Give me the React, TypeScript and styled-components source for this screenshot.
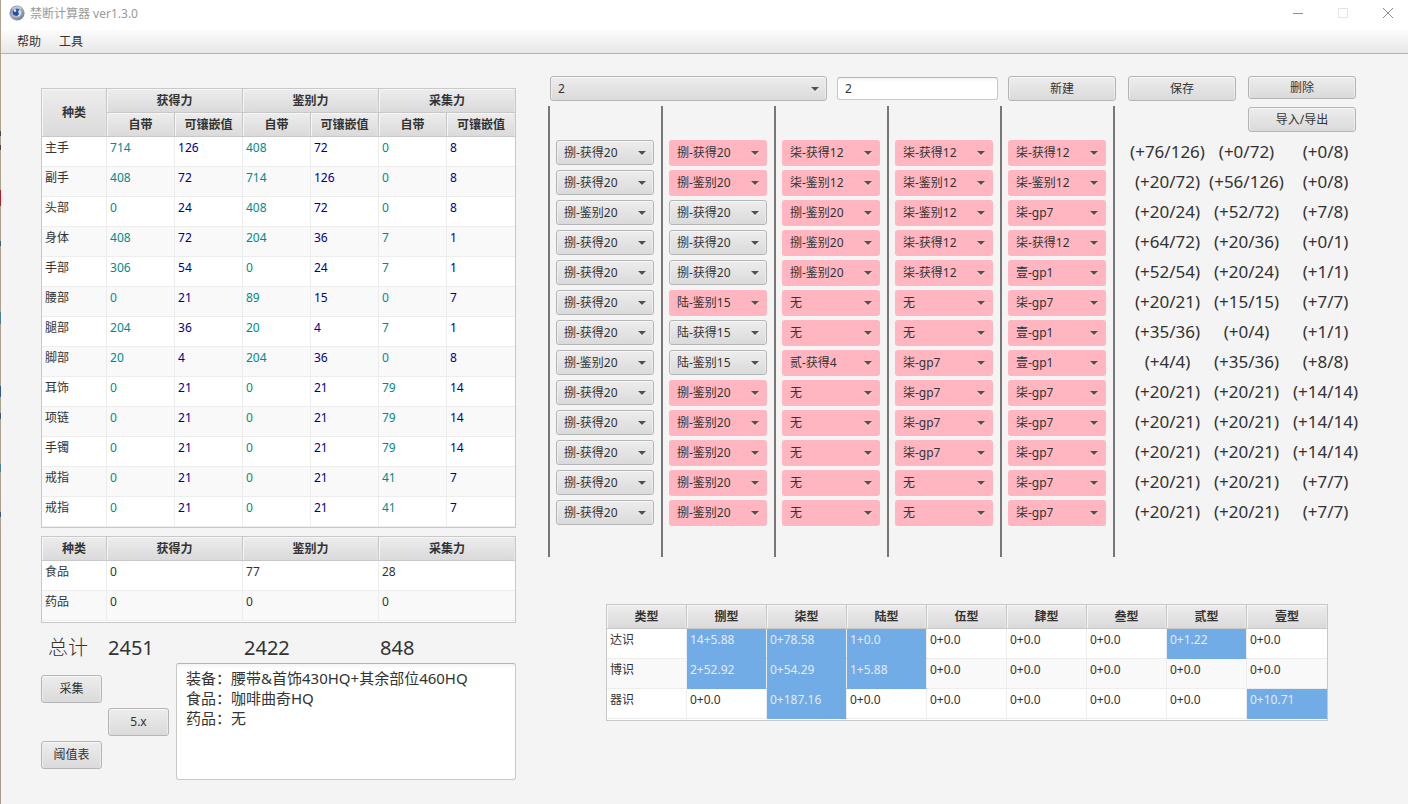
import React from "react";
import styled, { createGlobalStyle, css } from "styled-components";

const GlobalStyle = createGlobalStyle`
  *, *::before, *::after { box-sizing: border-box; }
  body { margin: 0; background: #f4f4f4; }
  body, button, input, select, textarea {
    font-family: "Noto Sans", "Noto Sans CJK SC", sans-serif;
    font-size: 12px;
    color: #333333;
  }
`;

const raised = css`
  border: 1px solid #b5b5b5;
  border-radius: 3px;
  background: linear-gradient(#ededed, #dadada);
  box-shadow: inset 0 1px 0 #f8f8f8, inset 1px 0 0 #ececec, inset -1px 0 0 #ececec;
`;

/* The first pixel column shows the desktop behind the window. */
const Window = styled.div`
  min-height: 100vh;
  padding-left: 1px;
  background:
    linear-gradient(
      transparent 131px, #3c4a5c 131px 136px, transparent 136px 145px,
      #4a4450 145px 150px, transparent 150px 190px, #b0202c 190px 206px,
      transparent 206px 241px, #45607a 241px 246px, transparent 246px 312px,
      #4a7f92 312px 324px, transparent 324px 386px, #35588a 386px 397px,
      transparent 397px 413px, #3f5a78 413px 419px, transparent 419px 464px,
      #4a7f92 464px 472px, transparent 472px 512px, #45557a 512px 517px,
      transparent 517px
    ) 0 0 / 1px 100% no-repeat,
    linear-gradient(#b0a48f, #a39c8c) 0 0 / 1px 100% no-repeat,
    #f4f4f4;
`;

const TitleBar = styled.header`
  display: flex;
  align-items: center;
  height: 30px;
  padding: 0 0 4px 8px;
  background: #ffffff;
`;

const Title = styled.h1`
  flex: 1;
  margin: 0 0 0 5px;
  padding-top: 1px;
  font-size: 12px;
  font-weight: 400;
  line-height: 20px;
  color: #999999;
`;

const WindowControls = styled.div`
  display: flex;
  gap: 5px;
`;

const WindowControl = styled.button<{ $tone: string }>`
  display: grid;
  place-items: center;
  width: 40px;
  height: 26px;
  padding: 0;
  border: 0;
  background: transparent;
  color: ${(p) => p.$tone};
`;

const MenuBar = styled.nav`
  display: flex;
  gap: 18px;
  height: 24px;
  padding: 0 16px;
  border-bottom: 1px solid #b5b5b5;
  background: linear-gradient(#fcfcfc, #e7e7e7);
`;

const MenuItem = styled.button`
  padding: 0;
  border: 0;
  background: transparent;
  line-height: 22px;
`;

const Main = styled.main`
  display: grid;
  grid-template-columns: minmax(0, 475fr) minmax(0, 817fr);
  gap: 32px;
  align-items: start;
  padding: 22px 43px 24px 40px;
`;

const GearPanel = styled.section`
  padding-top: 12px;
`;

const TableFrame = styled.div`
  margin-bottom: 8px;
  border: 1px solid #c8c8c8;
  background: #ffffff;
`;

const SpareFrame = styled(TableFrame)`
  margin-bottom: 0;
  padding-bottom: 1px;
`;

const MateriaFrame = styled(SpareFrame)`
  margin: 47px 37px 0 58px;
`;

const Table = styled.table`
  width: 100%;
  table-layout: fixed;
  border-collapse: separate;
  border-spacing: 0;
`;

const HeadCell = styled.th`
  height: 24px;
  padding: 1px 0 0;
  border-right: 1px solid #c8c8c8;
  border-bottom: 1px solid #c8c8c8;
  background: linear-gradient(#ededed, #dadada);
  box-shadow: inset 1px 1px 0 #f6f6f6, inset -1px 0 0 #e6e6e6;
  font-weight: 700;
  line-height: 22px;
  text-align: center;
  white-space: nowrap;

  &:last-child { border-right-width: 0; }
`;

const Row = styled.tr`
  background: #ffffff;
  &:nth-child(even) { background: #f9f9f9; }
`;

const Cell = styled.td<{ $color?: string; $marked?: boolean }>`
  height: 30px;
  padding: 0 3px;
  border-right: 1px solid #ededed;
  border-bottom: 1px solid ${(p) => (p.$marked ? "#72ace6" : "#ededed")};
  background: ${(p) => (p.$marked ? "#72ace6" : "transparent")};
  color: ${(p) => (p.$marked ? "#e6eaf4" : p.$color ?? "#333333")};
  line-height: 22px;
  vertical-align: top;
  white-space: nowrap;

  &:last-child { border-right-width: 0; }
`;

const Totals = styled.dl`
  display: grid;
  grid-template-columns: 66fr 136fr 136fr 137fr;
  height: 40px;
  margin: 0;
  padding-top: 5px;
  font-size: 20px;
  line-height: 40px;
`;

const TotalName = styled.dt`
  padding-left: 7px;
  font-weight: 300;
`;

const TotalValue = styled.dd`
  margin: 0;
  padding-left: 1px;
`;

const Footer = styled.div`
  display: flex;
  align-items: center;
  gap: 7px;
`;

const FooterButtons = styled.div`
  display: flex;
  align-items: center;
  gap: 6px;
`;

const FooterStack = styled.div`
  display: flex;
  flex-direction: column;
  gap: 38px;
`;

const Button = styled.button<{ $width: number; $height: number }>`
  ${raised}
  width: ${(p) => p.$width}px;
  height: ${(p) => p.$height}px;
  padding: 0;
  line-height: 20px;
`;

const Notes = styled.textarea`
  flex: 1;
  min-width: 0;
  height: 117px;
  padding: 4px 9px;
  border: 1px solid #c8c8c8;
  border-top-color: #b5b5b5;
  border-radius: 3px;
  background: linear-gradient(#f4f4f4, #ffffff 5px);
  font-size: 15px;
  line-height: 20px;
  resize: none;
`;

const PlanPanel = styled.section`
  min-width: 0;
`;

const Toolbar = styled.div`
  display: flex;
  align-items: flex-start;
  gap: 10px;
  height: 30px;
  padding: 0 9px 0 2px;
`;

const ToolbarButtons = styled.div`
  display: flex;
  gap: 12px;
`;

const SelectBox = styled.div<{ $over?: boolean; $basis?: number }>`
  position: relative;
  flex: ${(p) => (p.$basis ? `${p.$basis} 1 ${p.$basis}px` : "none")};
  height: 30px;
  padding: ${(p) => (p.$basis ? "0" : "2px 0")};

  select {
    ${raised}
    display: block;
    width: 100%;
    height: ${(p) => (p.$over ? 26 : 25)}px;
    padding: 0 20px 0 7px;
    appearance: none;
    line-height: 20px;
    ${(p) =>
      p.$over &&
      css`
        padding-left: 8px;
        border: 0;
        background: #ffb6c1;
        box-shadow: none;
      `}
  }

  &::after {
    content: "";
    position: absolute;
    top: ${(p) => (p.$basis ? 11 : 13)}px;
    right: 8px;
    border: 4px solid transparent;
    border-top-color: #505050;
    border-bottom-width: 0;
    filter: drop-shadow(0 1px 0 rgba(255, 255, 255, 0.5));
    pointer-events: none;
  }
`;

const NameInput = styled.input`
  flex: 161 1 161px;
  min-width: 0;
  height: 23px;
  margin-top: 1px;
  padding: 0 7px;
  border: 1px solid #c8c8c8;
  border-top-color: #b5b5b5;
  border-radius: 3px;
  background: linear-gradient(#f4f4f4, #ffffff 4px);
`;

const Board = styled.div`
  display: grid;
  grid-template-columns: repeat(5, minmax(0, 113fr)) minmax(0, 252fr);
`;

const SlotColumn = styled.div`
  padding: 32px 7px 29px 6px;
  border-left: 2px solid #777777;
`;

const StatColumn = styled.div`
  padding-left: 13px;
  border-left: 2px solid #777777;
`;

const StatHeader = styled.div`
  display: flex;
  justify-content: flex-end;
  height: 32px;
  padding: 1px 9px 0 0;
`;

const StatRow = styled.div`
  display: grid;
  grid-template-columns: repeat(3, 1fr);
  height: 30px;
  font-size: 17px;
  line-height: 28px;
  text-align: center;
  white-space: nowrap;
`;

const TEAL = "#008b8b";
const NAVY = "#00008b";

const gear: [string, ...number[]][] = [
  ["主手", 714, 126, 408, 72, 0, 8],
  ["副手", 408, 72, 714, 126, 0, 8],
  ["头部", 0, 24, 408, 72, 0, 8],
  ["身体", 408, 72, 204, 36, 7, 1],
  ["手部", 306, 54, 0, 24, 7, 1],
  ["腰部", 0, 21, 89, 15, 0, 7],
  ["腿部", 204, 36, 20, 4, 7, 1],
  ["脚部", 20, 4, 204, 36, 0, 8],
  ["耳饰", 0, 21, 0, 21, 79, 14],
  ["项链", 0, 21, 0, 21, 79, 14],
  ["手镯", 0, 21, 0, 21, 79, 14],
  ["戒指", 0, 21, 0, 21, 41, 7],
  ["戒指", 0, 21, 0, 21, 41, 7],
];

const supplies = [
  ["食品", "0", "77", "28"],
  ["药品", "0", "0", "0"],
];

/* A leading "!" marks a slot that needs forbidden melding. */
const slots = [
  ["捌-获得20", "捌-获得20", "捌-鉴别20", "捌-获得20", "捌-获得20", "捌-获得20", "捌-获得20", "捌-鉴别20", "捌-获得20", "捌-获得20", "捌-获得20", "捌-获得20", "捌-获得20"],
  ["!捌-获得20", "!捌-鉴别20", "捌-获得20", "捌-获得20", "捌-获得20", "!陆-鉴别15", "陆-获得15", "陆-鉴别15", "!捌-鉴别20", "!捌-鉴别20", "!捌-鉴别20", "!捌-鉴别20", "!捌-鉴别20"],
  ["!柒-获得12", "!柒-鉴别12", "!捌-鉴别20", "!捌-鉴别20", "!捌-鉴别20", "!无", "!无", "!贰-获得4", "!无", "!无", "!无", "!无", "!无"],
  ["!柒-获得12", "!柒-鉴别12", "!柒-鉴别12", "!柒-获得12", "!柒-获得12", "!无", "!无", "!柒-gp7", "!柒-gp7", "!柒-gp7", "!柒-gp7", "!无", "!无"],
  ["!柒-获得12", "!柒-鉴别12", "!柒-gp7", "!柒-获得12", "!壹-gp1", "!柒-gp7", "!壹-gp1", "!壹-gp1", "!柒-gp7", "!柒-gp7", "!柒-gp7", "!柒-gp7", "!柒-gp7"],
];

const stats = [
  ["(+76/126)", "(+0/72)", "(+0/8)"],
  ["(+20/72)", "(+56/126)", "(+0/8)"],
  ["(+20/24)", "(+52/72)", "(+7/8)"],
  ["(+64/72)", "(+20/36)", "(+0/1)"],
  ["(+52/54)", "(+20/24)", "(+1/1)"],
  ["(+20/21)", "(+15/15)", "(+7/7)"],
  ["(+35/36)", "(+0/4)", "(+1/1)"],
  ["(+4/4)", "(+35/36)", "(+8/8)"],
  ["(+20/21)", "(+20/21)", "(+14/14)"],
  ["(+20/21)", "(+20/21)", "(+14/14)"],
  ["(+20/21)", "(+20/21)", "(+14/14)"],
  ["(+20/21)", "(+20/21)", "(+7/7)"],
  ["(+20/21)", "(+20/21)", "(+7/7)"],
];

const materiaHeads = ["类型", "捌型", "柒型", "陆型", "伍型", "肆型", "叁型", "贰型", "壹型"];
const materia = [
  ["达识", "14+5.88", "0+78.58", "1+0.0", "0+0.0", "0+0.0", "0+0.0", "0+1.22", "0+0.0"],
  ["博识", "2+52.92", "0+54.29", "1+5.88", "0+0.0", "0+0.0", "0+0.0", "0+0.0", "0+0.0"],
  ["器识", "0+0.0", "0+187.16", "0+0.0", "0+0.0", "0+0.0", "0+0.0", "0+0.0", "0+10.71"],
];

const statNames = ["获得力", "鉴别力", "采集力"];

const AppIcon = () => (
  <svg width="16" height="16" viewBox="0 0 16 16" aria-hidden="true">
    <defs>
      <linearGradient id="rim" x1="0" y1="0" x2="1" y2="1">
        <stop offset="0" stopColor="#7d8188" />
        <stop offset="0.5" stopColor="#a9adb2" />
        <stop offset="1" stopColor="#6b6e74" />
      </linearGradient>
    </defs>
    <circle cx="8" cy="8" r="7.6" fill="url(#rim)" />
    <path d="M3 3.6A6.6 6.6 0 0 1 12.6 3L11 5 5 5z" fill="#c9ccd0" />
    <circle cx="7.6" cy="7.6" r="5.2" fill="#a8bcd6" />
    <path d="M3.4 7C4.2 4 8 3 10.6 4.6L8.6 6.6l1.6 2.6-2.4 1.8-3.4-1z" fill="#2450a4" />
    <circle cx="6" cy="5.6" r="1.3" fill="#e6f0fa" />
    <path d="M10.4 5.6c1.4 1.4 1 4.4-1.2 5.6" fill="none" stroke="#dfe5ec" strokeWidth="1.4" />
    <path d="M4 12.4c3 1.8 7.4.8 9-3" fill="none" stroke="#8f949a" />
  </svg>
);

function GearTable() {
  return (
    <TableFrame>
      <Table aria-label="装备属性">
        <colgroup>
          <col style={{ width: "13.75%" }} />
          <col span={6} />
        </colgroup>
        <thead>
          <tr>
            <HeadCell rowSpan={2}>种类</HeadCell>
            {statNames.map((n) => (
              <HeadCell key={n} colSpan={2}>{n}</HeadCell>
            ))}
          </tr>
          <tr>
            {statNames.map((n) => (
              <React.Fragment key={n}>
                <HeadCell>自带</HeadCell>
                <HeadCell>可镶嵌值</HeadCell>
              </React.Fragment>
            ))}
          </tr>
        </thead>
        <tbody>
          {gear.map((row, r) => (
            <Row key={r}>
              {row.map((value, c) => (
                <Cell key={c} $color={c === 0 ? undefined : c % 2 ? TEAL : NAVY}>{value}</Cell>
              ))}
            </Row>
          ))}
        </tbody>
      </Table>
    </TableFrame>
  );
}

function SupplyTable() {
  return (
    <SpareFrame>
      <Table aria-label="食品与药品">
        <colgroup>
          <col style={{ width: "13.75%" }} />
          <col span={3} />
        </colgroup>
        <thead>
          <tr>
            {["种类", ...statNames].map((n) => (
              <HeadCell key={n}>{n}</HeadCell>
            ))}
          </tr>
        </thead>
        <tbody>
          {supplies.map((row) => (
            <Row key={row[0]}>
              {row.map((value, c) => <Cell key={c}>{value}</Cell>)}
            </Row>
          ))}
        </tbody>
      </Table>
    </SpareFrame>
  );
}

function MateriaTable() {
  return (
    <MateriaFrame>
      <Table aria-label="魔晶石数量">
        <thead>
          <tr>
            {materiaHeads.map((n) => <HeadCell key={n}>{n}</HeadCell>)}
          </tr>
        </thead>
        <tbody>
          {materia.map((row) => (
            <Row key={row[0]}>
              {row.map((value, c) => (
                <Cell key={c} $marked={c > 0 && value !== "0+0.0"}>{value}</Cell>
              ))}
            </Row>
          ))}
        </tbody>
      </Table>
    </MateriaFrame>
  );
}

export default function App() {
  return (
    <>
      <GlobalStyle />
      <Window>
        <TitleBar>
          <AppIcon />
          <Title>禁断计算器 ver1.3.0</Title>
          <WindowControls>
            <WindowControl $tone="#8c8c8c" aria-label="最小化">
              <svg width="10" height="10" viewBox="0 0 10 10" stroke="currentColor"><path d="M0 5.5h10" /></svg>
            </WindowControl>
            <WindowControl $tone="#e4e4e4" aria-label="最大化" disabled>
              <svg width="10" height="10" viewBox="0 0 10 10" stroke="currentColor" fill="none"><path d="M.5.5h9v9h-9z" /></svg>
            </WindowControl>
            <WindowControl $tone="#8c8c8c" aria-label="关闭">
              <svg width="10" height="10" viewBox="0 0 10 10" stroke="currentColor"><path d="M0 0l10 10M10 0L0 10" /></svg>
            </WindowControl>
          </WindowControls>
        </TitleBar>
        <MenuBar>
          <MenuItem>帮助</MenuItem>
          <MenuItem>工具</MenuItem>
        </MenuBar>

        <Main>
          <GearPanel>
            <GearTable />
            <SupplyTable />
            <Totals>
              <TotalName>总计</TotalName>
              <TotalValue>2451</TotalValue>
              <TotalValue>2422</TotalValue>
              <TotalValue>848</TotalValue>
            </Totals>
            <Footer>
              <FooterButtons>
                <FooterStack>
                  <Button $width={61} $height={28}>采集</Button>
                  <Button $width={61} $height={28}>阈值表</Button>
                </FooterStack>
                <Button $width={61} $height={28}>5.x</Button>
              </FooterButtons>
              <Notes
                aria-label="配装说明"
                defaultValue={"装备：腰带&首饰430HQ+其余部位460HQ\n食品：咖啡曲奇HQ\n药品：无"}
              />
            </Footer>
          </GearPanel>

          <PlanPanel>
            <Toolbar>
              <SelectBox $basis={277}>
                <select aria-label="方案" defaultValue="2">
                  <option>2</option>
                </select>
              </SelectBox>
              <NameInput aria-label="方案名称" defaultValue="2" />
              <ToolbarButtons>
                <Button $width={108} $height={25}>新建</Button>
                <Button $width={108} $height={25}>保存</Button>
                <Button $width={108} $height={23}>删除</Button>
              </ToolbarButtons>
            </Toolbar>
            <Board>
              {slots.map((column, c) => (
                <SlotColumn key={c}>
                  {column.map((slot, r) => {
                    const over = slot.startsWith("!");
                    const name = over ? slot.slice(1) : slot;
                    return (
                      <SelectBox key={r} $over={over}>
                        <select aria-label={`${gear[r][0]} 孔${c + 1}`} defaultValue={name}>
                          <option>{name}</option>
                        </select>
                      </SelectBox>
                    );
                  })}
                </SlotColumn>
              ))}
              <StatColumn>
                <StatHeader>
                  <Button $width={108} $height={25}>导入/导出</Button>
                </StatHeader>
                {stats.map((row, r) => (
                  <StatRow key={r}>
                    {row.map((value, c) => <span key={c}>{value}</span>)}
                  </StatRow>
                ))}
              </StatColumn>
            </Board>
            <MateriaTable />
          </PlanPanel>
        </Main>
      </Window>
    </>
  );
}
